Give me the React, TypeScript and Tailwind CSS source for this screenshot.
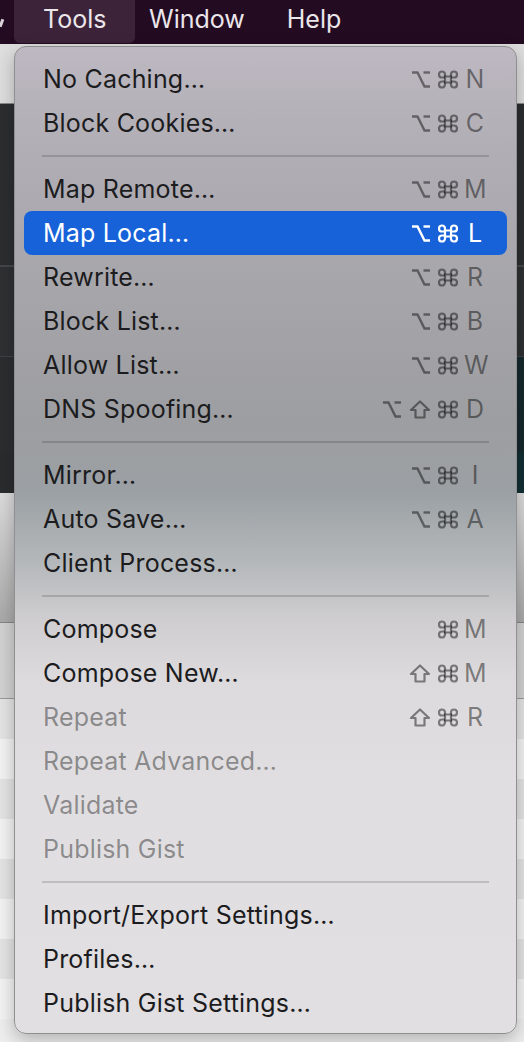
import type { ReactNode } from "react";

type Item = {
  label: string;
  keys?: string; // modifiers: a = option, s = shift, c = command
  key?: string;
  disabled?: boolean;
  active?: boolean;
};

const groups: Item[][] = [
  [
    { label: "No Caching…", keys: "ac", key: "N" },
    { label: "Block Cookies…", keys: "ac", key: "C" },
  ],
  [
    { label: "Map Remote…", keys: "ac", key: "M" },
    { label: "Map Local…", keys: "ac", key: "L", active: true },
    { label: "Rewrite…", keys: "ac", key: "R" },
    { label: "Block List…", keys: "ac", key: "B" },
    { label: "Allow List…", keys: "ac", key: "W" },
    { label: "DNS Spoofing…", keys: "asc", key: "D" },
  ],
  [
    { label: "Mirror…", keys: "ac", key: "I" },
    { label: "Auto Save…", keys: "ac", key: "A" },
    { label: "Client Process…" },
  ],
  [
    { label: "Compose", keys: "c", key: "M" },
    { label: "Compose New…", keys: "sc", key: "M" },
    { label: "Repeat", keys: "sc", key: "R", disabled: true },
    { label: "Repeat Advanced…", disabled: true },
    { label: "Validate", disabled: true },
    { label: "Publish Gist", disabled: true },
  ],
  [
    { label: "Import/Export Settings…" },
    { label: "Profiles…" },
    { label: "Publish Gist Settings…" },
  ],
];

function OptionKey() {
  return (
    <svg width="20" height="19" viewBox="0 0 20 19" fill="none" stroke="currentColor" strokeWidth="2.4">
      <path d="M1 2.5h5.5l7 14h5.5" />
      <path d="M12.5 2.5h6.5" />
    </svg>
  );
}

function CommandKey() {
  return (
    <svg width="20" height="19" viewBox="0 0 20 19" fill="none" stroke="currentColor" strokeWidth="2.2">
      <path d="M7 6.5h6v6H7z" />
      <path d="M7 6.5V4.5a3 3 0 1 0-3 3h3M13 6.5V4.5a3 3 0 1 1 3 3h-3M7 12.5v2a3 3 0 1 1-3-3h3M13 12.5v2a3 3 0 1 0 3-3h-3" />
    </svg>
  );
}

function ShiftKey() {
  return (
    <svg width="22" height="19" viewBox="0 0 22 19" fill="none" stroke="currentColor" strokeWidth="2.2" strokeLinejoin="round">
      <path d="M11 1.5 2 10h4.5v7.5h9V10H20z" />
    </svg>
  );
}

function Shortcut({ keys, k }: { keys: string; k: string }) {
  const icons: ReactNode[] = keys.split("").map((c, i) => {
    if (c === "a") return <OptionKey key={i} />;
    if (c === "s") return <ShiftKey key={i} />;
    return <CommandKey key={i} />;
  });
  return (
    <div className="flex items-center">
      <div className="flex items-center gap-[7px]">{icons}</div>
      <span className="ml-[6px] w-[22px] text-center text-[25px] leading-none">{k}</span>
    </div>
  );
}

function Row({ item }: { item: Item }) {
  const base = "flex h-[44px] items-center justify-between rounded-[8px] pl-[19px] pr-[21px]";
  const tone = item.active
    ? "bg-[#1762d9] text-white"
    : item.disabled
      ? "text-black/40"
      : "text-[#1c1c1e]";
  const keyTone = item.active ? "text-white" : "text-black/45";
  return (
    <div className={`${base} ${tone}`}>
      <span className="text-[25px] leading-none tracking-[0.2px]">{item.label}</span>
      {item.keys && item.key && (
        <span className={keyTone}>
          <Shortcut keys={item.keys} k={item.key} />
        </span>
      )}
    </div>
  );
}

function Separator() {
  return (
    <div className="flex h-[22px] items-center px-[18px]">
      <div className="h-[2px] w-full bg-black/15" />
    </div>
  );
}

function MenuBar() {
  return (
    <div className="flex h-[44px] items-start bg-[#230b21] text-[25px] text-[#ebe6ea]">
      <div className="flex h-[43px] w-[14px] items-center">
        <div className="mt-[2px] h-[8px] w-[3px] rotate-[20deg] bg-[#d9d2d8]" />
      </div>
      <div className="flex h-[43px] w-[121px] items-center rounded-b-[6px] bg-[#3c2339] pb-[4px] pl-[29px]">Tools</div>
      <div className="flex h-[43px] items-center pb-[4px] pl-[14px]">Window</div>
      <div className="flex h-[43px] items-center pb-[4px] pl-[42px]">Help</div>
    </div>
  );
}

function Backdrop() {
  const rows = [0, 1, 2, 3, 4, 5, 6, 7];
  return (
    <div className="flex flex-col">
      <div className="h-[60px] border-b border-[#8a8a8a] bg-[#dedede]" />
      <div className="flex h-[163px] border-b-[2px] border-[#44474a] bg-[#2b2d2f]" />
      <div className="h-[90px] border-b border-[#3f4245] bg-[#2e3032]" />
      <div className="h-[96px] bg-[#2b2d2f] bg-[linear-gradient(to_right,#2b2d2f_95%,#15292d_95%)]" />
      <div className="h-[40px] bg-[#2a2c2e] bg-[linear-gradient(to_right,#2a2c2e_95%,#122f34_95%)]" />
      <div className="h-[130px] border-b border-[#858585] bg-[linear-gradient(to_bottom,#dcdcdc,#a9a9a9)]" />
      <div className="h-[76px] border-b border-[#9a9a9a] bg-[#d2d2d2]" />
      {rows.map((r) => (
        <div key={r} className={`h-[40px] ${r % 2 === 0 ? "bg-[#e4e4e4]" : "bg-[#f3f3f3]"}`} />
      ))}
    </div>
  );
}

export default function App() {
  return (
    <div className="relative h-[1042px] w-[524px] overflow-hidden bg-[#eeeeee] font-['Inter','Noto_Sans',sans-serif]">
      <MenuBar />
      <Backdrop />
      <div className="absolute left-[14px] top-[46px] w-[503px] rounded-[12px] border border-[#8f8f92] bg-[linear-gradient(to_bottom,#bdb8c1_0%,#b1aeb5_10%,#a6a5aa_25%,#9d9ea1_38%,#9ba0a4_45%,#b3b7ba_52%,#cfcdcf_58%,#dcdadc_64%,#e0dee0_75%,#e1dfe1_100%)] px-[9px] pt-[10px] pb-[8px] shadow-[0_6px_18px_rgba(0,0,0,0.25)]">
        {groups.map((g, gi) => (
          <div key={gi}>
            {gi > 0 && <Separator />}
            {g.map((item) => (
              <Row key={item.label} item={item} />
            ))}
          </div>
        ))}
      </div>
    </div>
  );
}
